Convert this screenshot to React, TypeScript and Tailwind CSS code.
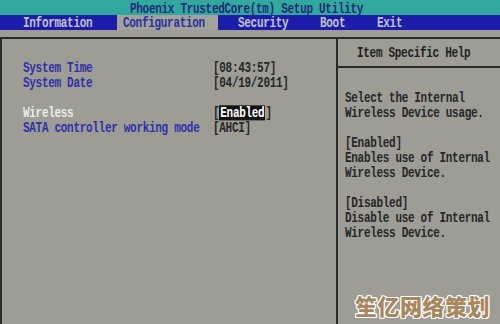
import React from "react";

const T = "inline-block scale-y-[1.25] whitespace-pre";

function L({ children, className = "" }: { children?: React.ReactNode; className?: string }) {
  return (
    <div className={"h-[15px] leading-[15px] whitespace-pre " + className}>
      <span className={T}>{children ?? " "}</span>
    </div>
  );
}

export default function App() {
  return (
    <div
      className="relative w-[500px] h-[324px] overflow-hidden bg-[#9d9d96] text-[11px] font-bold tracking-[-0.3px]"
      style={{ fontFamily: '"Liberation Mono", "DejaVu Sans Mono", monospace' }}
    >
      {/* Title bar */}
      <div className="h-[15px] pt-[2px] bg-[#31a89d] pl-[130px] text-[#1d2a7a]">
        <div className="leading-[15px] h-[13px]">
          <span className={T}>Phoenix TrustedCore(tm) Setup Utility</span>
        </div>
      </div>
      {/* Menu bar */}
      <div className="flex h-[15px] bg-[#1d1dab] text-[#c3c4cc]">
        <div className="w-[117px] pl-[23px] pt-[1px] leading-[15px]">
          <span className={T}>Information</span>
        </div>
        <div className="w-[101px] pl-[6px] pt-[1px] leading-[15px] bg-[#a3a39c] text-[#2a2fa0]">
          <span className={T}>Configuration</span>
        </div>
        <div className="w-[102px] pl-[20px] pt-[1px] leading-[15px]">
          <span className={T}>Security</span>
        </div>
        <div className="w-[57px] pt-[1px] leading-[15px]">
          <span className={T}>Boot</span>
        </div>
        <div className="pt-[1px] leading-[15px]">
          <span className={T}>Exit</span>
        </div>
      </div>
      {/* Frame */}
      <div className="mt-[7px] border-t-2 border-[#2a2a28] flex h-[287px]">
        <div className="w-[336px] border-l-2 border-[#2a2a28] pl-[21px] pt-[22px]">
          <div className="grid grid-cols-[190px_1fr]">
            <L className="text-[#2e30a8]">System Time</L>
            <L className="text-[#262626]">[08:43:57]</L>
            <L className="text-[#2e30a8]">System Date</L>
            <L className="text-[#262626]">[04/19/2011]</L>
            <L />
            <L />
            <L className="text-[#ececec]">Wireless</L>
            <div className="h-[15px] leading-[15px] text-[#262626]">
              <span className={T}>
                [<span className="bg-[#111] text-white px-[1px]">Enabled</span>]
              </span>
            </div>
            <L className="text-[#2e30a8]">SATA controller working mode</L>
            <L className="text-[#262626]">[AHCI]</L>
          </div>
        </div>
        <div className="flex-1 border-l-2 border-[#2a2a28] flex flex-col">
          <div className="h-[29px] pt-[7px] pl-[19px] border-b-2 border-[#2a2a28] text-[#222]">
            <L>Item Specific Help</L>
          </div>
          <div className="pt-[23px] pl-[7px] text-[#262626]">
            <L>Select the Internal</L>
            <L>Wireless Device usage.</L>
            <L />
            <L>[Enabled]</L>
            <L>Enables use of Internal</L>
            <L>Wireless Device.</L>
            <L />
            <L>[Disabled]</L>
            <L>Disable use of Internal</L>
            <L>Wireless Device.</L>
          </div>
        </div>
      </div>
      {/* Watermark */}
      <div
        className="absolute left-[355px] top-[292px] text-[22px] leading-[26px] font-black tracking-[0.5px] text-[#a9875e] [text-shadow:1px_1px_0_#fff,-1px_-1px_0_#fff,1px_-1px_0_#fff,-1px_1px_0_#fff,0_1px_0_#fff,0_-1px_0_#fff,1px_0_0_#fff,-1px_0_0_#fff]"
        style={{ fontFamily: '"Noto Sans CJK SC", sans-serif' }}
      >
        笙亿网络策划
      </div>
    </div>
  );
}
